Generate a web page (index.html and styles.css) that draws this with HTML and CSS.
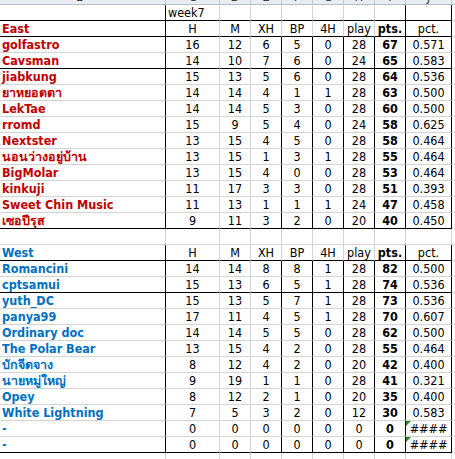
FILE: index.html
```html
<!DOCTYPE html>
<html>
<head>
<meta charset="utf-8">
<link rel="stylesheet" href="styles.css">
</head>
<body>
<div class="sheet">
  <div class="row hdr">
    <div class="h"><span>B</span></div><div class="h"><span>C</span></div><div class="h"><span>D</span></div><div class="h"><span>E</span></div><div class="h"><span>F</span></div><div class="h"><span>G</span></div><div class="h"><span>H</span></div><div class="h"><span>I</span></div><div class="h"><span>J</span></div><div class="h"><span>K</span></div>
  </div>
  <div class="row">
    <div class="c kb"></div><div class="c l">week7</div><div class="c"></div><div class="c"></div><div class="c"></div><div class="c"></div><div class="c"></div><div class="c kr"></div><div class="c kr"></div><div class="c"></div>
  </div>
  <div class="row top">
    <div class="c kb name east">East</div><div class="c">H</div><div class="c">M</div><div class="c">XH</div><div class="c">BP</div><div class="c">4H</div><div class="c">play</div><div class="c kr b">pts.</div><div class="c kr">pct.</div><div class="c"></div>
  </div>
  <div class="group east">
    <div class="row d"><div class="c name">golfastro</div><div class="c">16</div><div class="c">12</div><div class="c">6</div><div class="c">5</div><div class="c">0</div><div class="c">28</div><div class="c b">67</div><div class="c">0.571</div><div class="c"></div></div>
    <div class="row d"><div class="c name">Cavsman</div><div class="c">14</div><div class="c">10</div><div class="c">7</div><div class="c">6</div><div class="c">0</div><div class="c">24</div><div class="c b">65</div><div class="c">0.583</div><div class="c"></div></div>
    <div class="row d"><div class="c name">jiabkung</div><div class="c">15</div><div class="c">13</div><div class="c">5</div><div class="c">6</div><div class="c">0</div><div class="c">28</div><div class="c b">64</div><div class="c">0.536</div><div class="c"></div></div>
    <div class="row d"><div class="c name">ยาหยอดตา</div><div class="c">14</div><div class="c">14</div><div class="c">4</div><div class="c">1</div><div class="c">1</div><div class="c">28</div><div class="c b">63</div><div class="c">0.500</div><div class="c"></div></div>
    <div class="row d"><div class="c name">LekTae</div><div class="c">14</div><div class="c">14</div><div class="c">5</div><div class="c">3</div><div class="c">0</div><div class="c">28</div><div class="c b">60</div><div class="c">0.500</div><div class="c"></div></div>
    <div class="row d"><div class="c name">rromd</div><div class="c">15</div><div class="c">9</div><div class="c">5</div><div class="c">4</div><div class="c">0</div><div class="c">24</div><div class="c b">58</div><div class="c">0.625</div><div class="c"></div></div>
    <div class="row d"><div class="c name">Nextster</div><div class="c">13</div><div class="c">15</div><div class="c">4</div><div class="c">5</div><div class="c">0</div><div class="c">28</div><div class="c b">58</div><div class="c">0.464</div><div class="c"></div></div>
    <div class="row d"><div class="c name">นอนว่างอยู่บ้าน</div><div class="c">13</div><div class="c">15</div><div class="c">1</div><div class="c">3</div><div class="c">1</div><div class="c">28</div><div class="c b">55</div><div class="c">0.464</div><div class="c"></div></div>
    <div class="row d"><div class="c name">BigMolar</div><div class="c">13</div><div class="c">15</div><div class="c">4</div><div class="c">0</div><div class="c">0</div><div class="c">28</div><div class="c b">53</div><div class="c">0.464</div><div class="c"></div></div>
    <div class="row d"><div class="c name">kinkuji</div><div class="c">11</div><div class="c">17</div><div class="c">3</div><div class="c">3</div><div class="c">0</div><div class="c">28</div><div class="c b">51</div><div class="c">0.393</div><div class="c"></div></div>
    <div class="row d"><div class="c name">Sweet Chin Music</div><div class="c">11</div><div class="c">13</div><div class="c">1</div><div class="c">1</div><div class="c">1</div><div class="c">24</div><div class="c b">47</div><div class="c">0.458</div><div class="c"></div></div>
    <div class="row d last"><div class="c name">เซอปีรุส</div><div class="c">9</div><div class="c">11</div><div class="c">3</div><div class="c">2</div><div class="c">0</div><div class="c">20</div><div class="c b">40</div><div class="c">0.450</div><div class="c"></div></div>
  </div>
  <div class="row blank">
    <div class="c"></div><div class="c"></div><div class="c"></div><div class="c"></div><div class="c"></div><div class="c"></div><div class="c"></div><div class="c"></div><div class="c"></div><div class="c"></div>
  </div>
  <div class="row top">
    <div class="c kb name west">West</div><div class="c">H</div><div class="c">M</div><div class="c">XH</div><div class="c">BP</div><div class="c">4H</div><div class="c">play</div><div class="c kr b">pts.</div><div class="c kr">pct.</div><div class="c"></div>
  </div>
  <div class="group west">
    <div class="row d"><div class="c name">Romancini</div><div class="c">14</div><div class="c">14</div><div class="c">8</div><div class="c">8</div><div class="c">1</div><div class="c">28</div><div class="c b">82</div><div class="c">0.500</div><div class="c"></div></div>
    <div class="row d"><div class="c name">cptsamui</div><div class="c">15</div><div class="c">13</div><div class="c">6</div><div class="c">5</div><div class="c">1</div><div class="c">28</div><div class="c b">74</div><div class="c">0.536</div><div class="c"></div></div>
    <div class="row d"><div class="c name">yuth_DC</div><div class="c">15</div><div class="c">13</div><div class="c">5</div><div class="c">7</div><div class="c">1</div><div class="c">28</div><div class="c b">73</div><div class="c">0.536</div><div class="c"></div></div>
    <div class="row d"><div class="c name">panya99</div><div class="c">17</div><div class="c">11</div><div class="c">4</div><div class="c">5</div><div class="c">1</div><div class="c">28</div><div class="c b">70</div><div class="c">0.607</div><div class="c"></div></div>
    <div class="row d"><div class="c name">Ordinary doc</div><div class="c">14</div><div class="c">14</div><div class="c">5</div><div class="c">5</div><div class="c">0</div><div class="c">28</div><div class="c b">62</div><div class="c">0.500</div><div class="c"></div></div>
    <div class="row d"><div class="c name">The Polar Bear</div><div class="c">13</div><div class="c">15</div><div class="c">4</div><div class="c">2</div><div class="c">0</div><div class="c">28</div><div class="c b">55</div><div class="c">0.464</div><div class="c"></div></div>
    <div class="row d"><div class="c name">บักจีดจาง</div><div class="c">8</div><div class="c">12</div><div class="c">4</div><div class="c">2</div><div class="c">0</div><div class="c">20</div><div class="c b">42</div><div class="c">0.400</div><div class="c"></div></div>
    <div class="row d"><div class="c name">นายหมู่ใหญ่</div><div class="c">9</div><div class="c">19</div><div class="c">1</div><div class="c">1</div><div class="c">0</div><div class="c">28</div><div class="c b">41</div><div class="c">0.321</div><div class="c"></div></div>
    <div class="row d"><div class="c name">Opey</div><div class="c">8</div><div class="c">12</div><div class="c">2</div><div class="c">1</div><div class="c">0</div><div class="c">20</div><div class="c b">35</div><div class="c">0.400</div><div class="c"></div></div>
    <div class="row d"><div class="c name">White Lightning</div><div class="c">7</div><div class="c">5</div><div class="c">3</div><div class="c">2</div><div class="c">0</div><div class="c">12</div><div class="c b">30</div><div class="c">0.583</div><div class="c"></div></div>
    <div class="row d"><div class="c name">-</div><div class="c">0</div><div class="c">0</div><div class="c">0</div><div class="c">0</div><div class="c">0</div><div class="c">0</div><div class="c b">0</div><div class="c err">####</div><div class="c"></div></div>
    <div class="row d last"><div class="c name">-</div><div class="c">0</div><div class="c">0</div><div class="c">0</div><div class="c">0</div><div class="c">0</div><div class="c">0</div><div class="c b">0</div><div class="c err">####</div><div class="c"></div></div>
  </div>
  <div class="row blank">
    <div class="c"></div><div class="c"></div><div class="c"></div><div class="c"></div><div class="c"></div><div class="c"></div><div class="c"></div><div class="c"></div><div class="c"></div><div class="c"></div>
  </div>
</div>
</body>
</html>
```

FILE: styles.css
```css
html, body {
  margin: 0;
  padding: 0;
  background: #ffffff;
  overflow: hidden;
}
body {
  width: 455px;
  height: 459px;
  font-family: "DejaVu Sans Condensed", "DejaVu Sans", sans-serif;
  font-stretch: condensed;
  font-size: 12.5px;
  color: #000000;
}
.sheet {
  margin-left: -5px;
  width: 470px;
}
.row {
  display: grid;
  grid-template-columns: 171px 54px 31px 31px 31px 31px 31px 31px 46px 1fr;
  height: 16px;
}
.c {
  box-sizing: border-box;
  height: 16px;
  border-right: 1px solid #d4d4d4;
  border-bottom: 1px solid #d4d4d4;
  text-align: center;
  line-height: 15px;
  white-space: nowrap;
  overflow: hidden;
  position: relative;
}
.c.l {
  text-align: left;
  padding-left: 2px;
}
.c.name {
  text-align: left;
  padding-left: 7px;
  font-weight: bold;
}
.b {
  font-weight: bold;
}
.hdr {
  height: 5px;
}
.h {
  box-sizing: border-box;
  height: 5px;
  overflow: hidden;
  background: #e9edf2;
  border-right: 1px solid #c5cbd3;
  border-bottom: 1px solid #b8bec6;
  text-align: center;
  font-size: 13px;
  color: #3c3c3c;
}
.h span {
  display: block;
  line-height: 16px;
  margin-top: -11px;
}
.east .name, .name.east {
  color: #c00000;
}
.west .name, .name.west {
  color: #0070c0;
}
/* black borders */
.c.kb { border-right-color: #000; }
.c.kr { border-right-color: #000; }
.row.top .c { border-bottom-color: #000; }
.row.top + .group .row .c { }
.row.d .c:nth-child(1),
.row.d .c:nth-child(4),
.row.d .c:nth-child(5),
.row.d .c:nth-child(6),
.row.d .c:nth-child(7),
.row.d .c:nth-child(8),
.row.d .c:nth-child(9) {
  border-right-color: #000;
}
.row.top .c:nth-child(1),
.row.top .c:nth-child(8),
.row.top .c:nth-child(9) {
  border-right-color: #000;
}
.row.d.last .c {
  border-bottom-color: #000;
}
.row.d.last .c:nth-child(10) {
  border-bottom-color: #d4d4d4;
}
.row.top .c:nth-child(10) {
  border-bottom-color: #d4d4d4;
}
.row:nth-child(2) .c {
  border-bottom-color: #000;
}
.row:nth-child(2) .c:nth-child(10) {
  border-bottom-color: #d4d4d4;
}
.err::before {
  content: "";
  position: absolute;
  left: 0;
  top: 0;
  width: 0;
  height: 0;
  border-top: 5px solid #1f8f1f;
  border-right: 5px solid transparent;
}
```
